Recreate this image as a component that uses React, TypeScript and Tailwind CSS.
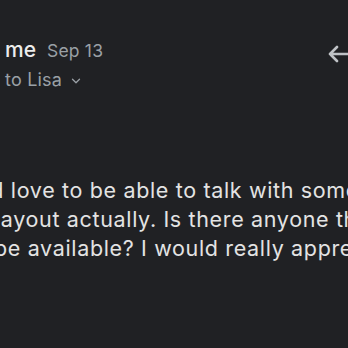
import { ChevronDown } from 'lucide-react';

export default function App() {
  const lines = [
    { text: 'I’d love to be able to talk with someone about', indent: 'ml-[-21px]' },
    { text: 'layout actually. Is there anyone that would', indent: 'ml-[-5px]' },
    { text: 'be available? I would really appreciate it.', indent: 'ml-[-6px]' },
  ];

  return (
    <div
      className="w-[348px] h-[348px] overflow-hidden bg-[#202124] text-[#e3e3e3]"
      style={{ fontFamily: 'Inter, "Noto Sans", sans-serif' }}
    >
      {/* Header */}
      <div className="flex items-start justify-between pt-[36px] pl-[5px]">
        <div className="flex flex-col">
          <div className="flex items-baseline gap-[11px] leading-[28px]">
            <span className="text-[21px] font-medium text-[#ececec]">me</span>
            <span className="text-[17.5px] tracking-[0.2px] text-[#9aa0a6]">Sep 13</span>
          </div>
          <div className="flex items-center gap-[7px] mt-[2px] leading-[26px] text-[18px] tracking-[0.2px] text-[#9aa0a6]">
            <span>to Lisa</span>
            <ChevronDown className="w-[14px] h-[14px] mt-[2px]" strokeWidth={2.2} />
          </div>
        </div>
        <svg width="20" height="18" viewBox="0 0 20 18" className="mt-[9px] shrink-0">
          <path
            d="M9 2 L2 9 L9 16 M2 9 L20 9"
            fill="none"
            stroke="#bfc2c6"
            strokeWidth="2.6"
            strokeLinecap="round"
            strokeLinejoin="round"
          />
        </svg>
      </div>

      {/* Body */}
      <div className="mt-[83px] text-[21.5px] leading-[29px] tracking-[0.65px]">
        {lines.map((l) => (
          <div key={l.text} className={`whitespace-nowrap ${l.indent}`}>
            {l.text}
          </div>
        ))}
      </div>
    </div>
  );
}
